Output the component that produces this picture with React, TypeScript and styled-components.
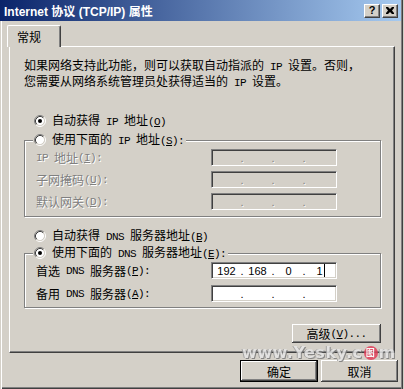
import React from 'react';
import styled, { createGlobalStyle } from 'styled-components';

const FACE = '#d4d0c8';
const CJK = '"Noto Sans CJK SC", "Liberation Sans", sans-serif';

const GlobalStyle = createGlobalStyle`
  html, body { margin: 0; padding: 0; background: ${FACE}; }
  body { font-family: ${CJK}; font-size: 12px; color: #000; }
  * { box-sizing: border-box; }
`;

const Window = styled.div`
  position: relative;
  width: 404px;
  height: 389px;
  display: flex;
  flex-direction: column;
  background: ${FACE};
  overflow: hidden;
  box-shadow: inset 1px 0 ${FACE}, inset 2px 0 #fff, inset -1px 0 ${FACE}, inset -2px 0 #404040,
    inset -3px 0 #808080, inset 0 -1px #404040, inset 0 -2px #808080;
`;

const TitleBar = styled.div`
  height: 21px;
  margin-right: 3px;
  padding: 0 3px 0 4px;
  display: flex;
  align-items: center;
  background: linear-gradient(to right, #0a246a, #a6caf0);
`;

const TitleText = styled.div`
  flex: 1;
  color: #fff;
  font: bold 12px "Liberation Sans", "Noto Sans CJK SC", sans-serif;
`;

const CaptionButton = styled.div<{ $gap?: boolean }>`
  width: 16px;
  height: 14px;
  margin-left: ${(p) => (p.$gap ? 2 : 0)}px;
  display: flex;
  align-items: center;
  justify-content: center;
  background: ${FACE};
  border: 1px solid;
  border-color: #fff #404040 #404040 #fff;
  box-shadow: inset -1px -1px #808080;
  font: bold 11px "Liberation Sans", sans-serif;
  line-height: 1;
`;

/* SimSun-like half-width Latin: monospace, 6px advance */
const Latin = styled.span`
  font-family: "Liberation Mono", monospace;
  font-size: 11px;
  letter-spacing: -0.6px;
  white-space: pre;
`;

const Body = styled.div`
  flex: 1;
  display: flex;
  flex-direction: column;
  padding: 4px 9px 0 9px;
`;

const TabStrip = styled.div`
  display: flex;
  height: 21px;
`;

const Tab = styled.div`
  position: relative;
  z-index: 1;
  margin-left: -2px;
  width: 54px;
  height: 22px;
  padding: 3px 0 0 9px;
  background: ${FACE};
  border-top: 1px solid #fff;
  border-left: 1px solid #fff;
  border-right: 1px solid #404040;
  border-top-left-radius: 2px;
  border-top-right-radius: 2px;
  box-shadow: inset -1px 0 #808080;
  line-height: 16px;
`;

const Panel = styled.div`
  height: 307px;
  display: flex;
  flex-direction: column;
  padding: 11px 13px 0 14px;
  border: 1px solid;
  border-color: #fff #404040 #404040 #fff;
  box-shadow: inset -1px -1px #808080;
`;

const Intro = styled.p`
  margin: 0;
  line-height: 14px;
  white-space: nowrap;
`;

const RadioRow = styled.div<{ $top: number }>`
  display: flex;
  align-items: center;
  gap: 6px;
  height: 16px;
  margin: ${(p) => p.$top}px 0 0 10px;
  line-height: 16px;
  white-space: nowrap;
`;

const Group = styled.fieldset<{ $top: number; $bottom: number }>`
  margin: ${(p) => p.$top}px 0 0 0;
  padding: 0 0 ${(p) => p.$bottom}px 11px;
  min-inline-size: 0;
  border: 1px solid #808080;
  box-shadow: inset 1px 1px #fff, 1px 1px #fff;
`;

const Legend = styled.legend`
  margin-left: -3px;
  padding: 0 2px 0 1px;
  height: 16px;
  display: flex;
  align-items: center;
  gap: 6px;
  background: ${FACE};
  line-height: 16px;
  white-space: nowrap;
`;

const FieldGrid = styled.div<{ $gap: number }>`
  display: grid;
  grid-template-columns: 175px 126px;
  row-gap: ${(p) => p.$gap}px;
  margin-top: 1px;
`;

const Label = styled.div<{ $disabled?: boolean }>`
  height: 17px;
  display: flex;
  align-items: center;
  white-space: nowrap;
  color: ${(p) => (p.$disabled ? '#808080' : '#000')};
  text-shadow: ${(p) => (p.$disabled ? '1px 1px #fff' : 'none')};
`;

const IpBox = styled.div<{ $disabled?: boolean }>`
  height: 17px;
  display: flex;
  align-items: center;
  padding-left: 1px;
  background: ${(p) => (p.$disabled ? FACE : '#fff')};
  border: 1px solid;
  border-color: #808080 #fff #fff #808080;
  box-shadow: inset 1px 1px #404040, inset -1px -1px ${FACE};
  font: 11px "Liberation Sans", sans-serif;
  color: ${(p) => (p.$disabled ? '#808080' : '#000')};
  text-shadow: ${(p) => (p.$disabled ? '1px 1px #fff' : 'none')};
`;

const Octet = styled.span`
  position: relative;
  width: 27px;
  text-align: center;
`;

const Dot = styled.span`
  width: 4px;
  text-align: center;
`;

const Caret = styled.span`
  position: absolute;
  top: -1px;
  margin-left: 1px;
  width: 1px;
  height: 13px;
  background: #000;
`;

const Button = styled.div<{ $w: number; $h: number; $default?: boolean }>`
  width: ${(p) => p.$w}px;
  height: ${(p) => p.$h}px;
  display: flex;
  align-items: center;
  justify-content: center;
  background: ${FACE};
  white-space: nowrap;
  border: ${(p) => (p.$default ? '1px solid #000' : 'none')};
  box-shadow: inset -1px -1px #404040, inset 1px 1px #fff, inset -2px -2px #808080;
`;

const AdvancedRow = styled.div`
  display: flex;
  justify-content: flex-end;
  margin-top: 16px;
`;

const Footer = styled.div`
  display: flex;
  justify-content: flex-end;
  gap: 3px;
  margin: 7px -3px 0 0;
`;

const Watermark = styled.div`
  position: absolute;
  left: 242px;
  top: 343px;
  display: flex;
  align-items: center;
  font: 900 16px "DejaVu Sans", "Liberation Sans", sans-serif;
  letter-spacing: 0.5px;
  color: #e6e6e6;
  opacity: 0.85;
  text-shadow: 1px 1px 0 #7a7a7a, -1px 0 0 #9a9a9a;
  pointer-events: none;
`;

const WaterLogo = styled.span`
  width: 14px;
  height: 14px;
  margin: 0 1px;
  border-radius: 50%;
  background: #e0405a;
  color: #fff;
  font: bold 9px "Noto Sans CJK SC", sans-serif;
  text-shadow: none;
  display: flex;
  align-items: center;
  justify-content: center;
`;

const Radio = ({ checked }: { checked?: boolean }) => (
  <svg width="12" height="12" viewBox="0 0 12 12" style={{ flex: 'none' }}>
    <circle cx="6" cy="6" r="4.2" fill="#fff" />
    <path d="M2.11 9.89A5.5 5.5 0 0 1 9.89 2.11" stroke="#808080" fill="none" />
    <path d="M9.89 2.11A5.5 5.5 0 0 1 2.11 9.89" stroke="#fff" fill="none" />
    <path d="M2.82 9.18A4.5 4.5 0 0 1 9.18 2.82" stroke="#404040" fill="none" />
    <path d="M9.18 2.82A4.5 4.5 0 0 1 2.82 9.18" stroke={FACE} fill="none" />
    {checked && <circle cx="6" cy="6" r="2" fill="#000" />}
  </svg>
);

const CloseGlyph = () => (
  <svg width="8" height="7" viewBox="0 0 8 7">
    <path d="M0 0h2l2 2 2-2h2v1L6 3.5 8 6v1H6L4 5 2 7H0V6l2-2.5L0 1z" fill="#000" />
  </svg>
);

const IpField = ({ values, disabled, caret }: { values?: string[]; disabled?: boolean; caret?: boolean }) => {
  const parts = values ?? ['', '', '', ''];
  return (
    <IpBox $disabled={disabled}>
      {parts.map((v, i) => (
        <React.Fragment key={i}>
          <Octet>
            {v}
            {caret && i === 3 && <Caret />}
          </Octet>
          {i < 3 && <Dot>.</Dot>}
        </React.Fragment>
      ))}
    </IpBox>
  );
};

const Key = ({ k, colon }: { k: string; colon?: boolean }) => (
  <Latin>
    (<u>{k}</u>){colon ? ':' : ''}
  </Latin>
);

export default function App() {
  return (
    <>
      <GlobalStyle />
      <Window>
        <TitleBar>
          <TitleText>Internet 协议 (TCP/IP) 属性</TitleText>
          <CaptionButton>?</CaptionButton>
          <CaptionButton $gap>
            <CloseGlyph />
          </CaptionButton>
        </TitleBar>
        <Body>
          <TabStrip>
            <Tab>常规</Tab>
          </TabStrip>
          <Panel>
            <Intro>
              如果网络支持此功能，则可以获取自动指派的<Latin> IP </Latin>设置。否则，
              <br />
              您需要从网络系统管理员处获得适当的<Latin> IP </Latin>设置。
            </Intro>
            <RadioRow $top={23}>
              <Radio checked />
              <span>
                自动获得<Latin> IP </Latin>地址<Key k="O" />
              </span>
            </RadioRow>
            <Group $top={3} $bottom={6}>
              <Legend>
                <Radio />
                <span>
                  使用下面的<Latin> IP </Latin>地址<Key k="S" colon />
                </span>
              </Legend>
              <FieldGrid $gap={5}>
                <Label $disabled>
                  <Latin>IP </Latin>地址<Key k="I" colon />
                </Label>
                <IpField disabled />
                <Label $disabled>
                  子网掩码<Key k="U" colon />
                </Label>
                <IpField disabled />
                <Label $disabled>
                  默认网关<Key k="D" colon />
                </Label>
                <IpField disabled />
              </FieldGrid>
            </Group>
            <RadioRow $top={11}>
              <Radio />
              <span>
                自动获得<Latin> DNS </Latin>服务器地址<Key k="B" />
              </span>
            </RadioRow>
            <Group $top={1} $bottom={5}>
              <Legend>
                <Radio checked />
                <span>
                  使用下面的<Latin> DNS </Latin>服务器地址<Key k="E" colon />
                </span>
              </Legend>
              <FieldGrid $gap={6}>
                <Label>
                  首选<Latin> DNS </Latin>服务器<Key k="P" colon />
                </Label>
                <IpField values={['192', '168', '0', '1']} caret />
                <Label>
                  备用<Latin> DNS </Latin>服务器<Key k="A" colon />
                </Label>
                <IpField />
              </FieldGrid>
            </Group>
            <AdvancedRow>
              <Button $w={89} $h={19}>
                高级<Latin>
                  (<u>V</u>)...
                </Latin>
              </Button>
            </AdvancedRow>
          </Panel>
          <Footer>
            <Button $w={78} $h={22} $default>
              确定
            </Button>
            <Button $w={77} $h={22}>
              取消
            </Button>
          </Footer>
        </Body>
        <Watermark>
          www.Yesky.c<WaterLogo>图</WaterLogo>m
        </Watermark>
      </Window>
    </>
  );
}
